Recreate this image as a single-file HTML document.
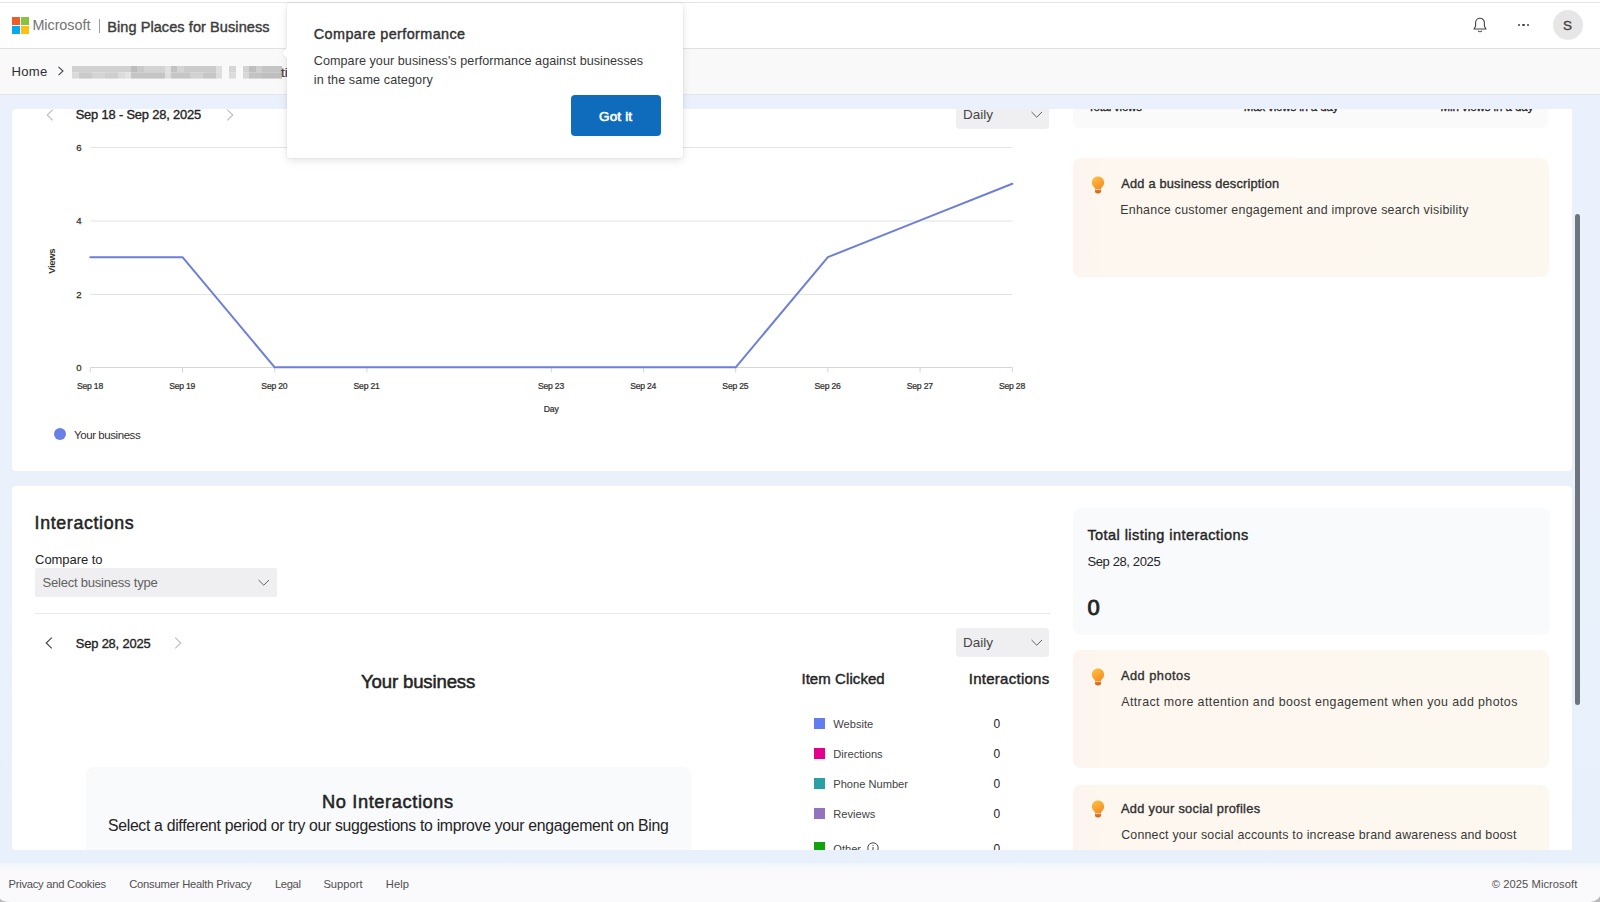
<!DOCTYPE html>
<html><head><meta charset="utf-8">
<style>
*{box-sizing:border-box;margin:0;padding:0}
html,body{width:1600px;height:902px;overflow:hidden;background:#fff;font-family:"Liberation Sans",sans-serif;color:#242424}
.t{position:absolute;white-space:nowrap;line-height:1}
.b{position:absolute}
.ic{position:absolute}
.bulb{position:absolute}
</style></head>
<body>
<div class="b" style="left:0;top:2px;width:1600px;height:1px;background:#e4e4e4"></div>
<div class="b" style="left:0;top:3px;width:1600px;height:45px;background:#ffffff"></div>
<div class="b" style="left:0;top:48px;width:1600px;height:1px;background:#e1e1e1"></div>
<div class="b" style="left:0;top:49px;width:1600px;height:45px;background:#faf9fa"></div>
<div class="b" style="left:0;top:94px;width:1600px;height:1px;background:#e2e5ea"></div>
<div class="b" style="left:0;top:95px;width:1600px;height:769px;background:linear-gradient(180deg,#ebf1fc,#e8f1fb)"></div>
<div class="b" style="left:0;top:863px;width:1600px;height:39px;background:linear-gradient(180deg,#eff5fb 0px,#f7f8fb 5px,#faf9fb 10px)"></div>

<!-- header -->
<div class="b" style="left:12px;top:17px;width:8px;height:8px;background:#f05b27"></div>
<div class="b" style="left:21px;top:17px;width:8px;height:8px;background:#89c23f"></div>
<div class="b" style="left:12px;top:26px;width:8px;height:8px;background:#02aaee"></div>
<div class="b" style="left:21px;top:26px;width:8px;height:8px;background:#fdbf12"></div>
<div class="b" style="left:98.5px;top:18.5px;width:1px;height:14px;background:#9e9e9e"></div>
<svg class="ic" style="left:1472px;top:17px" width="16" height="16" viewBox="0 0 16 16"><path d="M8 1.2c-2.6 0-4.4 2-4.4 4.5v3.6L2 12h12l-1.6-2.7V5.7C12.4 3.2 10.6 1.2 8 1.2z" fill="none" stroke="#424242" stroke-width="1.1" stroke-linejoin="round"/><path d="M6.3 13.6c.3.8 1 1.2 1.7 1.2s1.4-.4 1.7-1.2" fill="none" stroke="#424242" stroke-width="1.1"/></svg>
<div class="b" style="left:1517.5px;top:24px;width:2.4px;height:2.4px;border-radius:50%;background:#424242"></div>
<div class="b" style="left:1522.2px;top:24px;width:2.4px;height:2.4px;border-radius:50%;background:#424242"></div>
<div class="b" style="left:1527px;top:24px;width:2.4px;height:2.4px;border-radius:50%;background:#424242"></div>
<div class="b" style="left:1552.5px;top:10px;width:30px;height:30px;border-radius:50%;background:#e6e6e6"></div>
<div class="t" style="left:1563px;top:19px;font-size:13.5px;font-weight:400;-webkit-text-stroke:0.35px #424242;color:#424242">S</div>
<div class="t" style="left:32.40px;top:18.11px;font-size:14.40px;font-weight:400;color:#737373;letter-spacing:-0.047px;">Microsoft</div>
<div class="t" style="left:107.20px;top:19.53px;font-size:14.50px;font-weight:400;color:#3d3d3d;letter-spacing:0.085px;-webkit-text-stroke:0.41px #3d3d3d;">Bing Places for Business</div>
<div class="t" style="left:11.40px;top:65.01px;font-size:13.10px;font-weight:400;color:#2e2e2e;letter-spacing:0.318px;">Home</div>
<!-- breadcrumb -->
<svg class="ic" style="left:57px;top:66px" width="8" height="10" viewBox="0 0 8 10"><path d="M1.5 0.8L6 5l-4.5 4.2" fill="none" stroke="#424242" stroke-width="1.1"/></svg>
<svg class="b" style="left:0;top:0" width="300" height="90"><rect x="72" y="66" width="59" height="6.3" fill="#d1d1d1"/><rect x="131" y="66" width="6" height="6.3" fill="#bcbcbc"/><rect x="137" y="66" width="7" height="6.3" fill="#c9c9c9"/><rect x="144" y="66" width="21" height="6.3" fill="#d3d3d3"/><rect x="165" y="66" width="6" height="6.3" fill="#e0e0e0"/><rect x="171" y="66" width="6" height="6.3" fill="#c2c2c2"/><rect x="177" y="66" width="7" height="6.3" fill="#d4d4d4"/><rect x="184" y="66" width="32" height="6.3" fill="#cbcbcb"/><rect x="216" y="66" width="6" height="6.3" fill="#dedede"/><rect x="229" y="66" width="7" height="6.3" fill="#d6d6d6"/><rect x="243" y="66" width="6" height="6.3" fill="#d3d3d3"/><rect x="249" y="66" width="7" height="6.3" fill="#bebebe"/><rect x="256" y="66" width="6" height="6.3" fill="#cfcfcf"/><rect x="262" y="66" width="20" height="6.3" fill="#c4c4c4"/><rect x="72" y="72.3" width="7" height="6.3" fill="#d9d9d9"/><rect x="79" y="72.3" width="13" height="6.3" fill="#cacaca"/><rect x="92" y="72.3" width="13" height="6.3" fill="#d4d4d4"/><rect x="105" y="72.3" width="13" height="6.3" fill="#cecece"/><rect x="118" y="72.3" width="7" height="6.3" fill="#dbdbdb"/><rect x="125" y="72.3" width="6" height="6.3" fill="#e3e3e3"/><rect x="131" y="72.3" width="34" height="6.3" fill="#c5c5c5"/><rect x="165" y="72.3" width="6" height="6.3" fill="#dedede"/><rect x="171" y="72.3" width="19" height="6.3" fill="#c6c6c6"/><rect x="190" y="72.3" width="13" height="6.3" fill="#d1d1d1"/><rect x="203" y="72.3" width="13" height="6.3" fill="#c6c6c6"/><rect x="216" y="72.3" width="6" height="6.3" fill="#dddddd"/><rect x="229" y="72.3" width="7" height="6.3" fill="#dbdbdb"/><rect x="243" y="72.3" width="6" height="6.3" fill="#d7d7d7"/><rect x="249" y="72.3" width="13" height="6.3" fill="#c3c3c3"/><rect x="262" y="72.3" width="20" height="6.3" fill="#bfbfbf"/></svg>
<div class="t" style="left:281px;top:65.5px;font-size:13.5px;color:#3a3a3a;-webkit-text-stroke:0.2px #3a3a3a">ti</div>

<!-- clip container -->
<div class="b" style="left:12px;top:109px;width:1560px;height:741px;overflow:hidden;border-radius:4px 0 0 4px">
 <div class="b" style="left:-12px;top:-109px;width:1600px;height:902px">
  <div class="b" style="left:12px;top:60px;width:1560px;height:411px;background:#fff;border-radius:4px"></div>
  <div class="b" style="left:12px;top:485.7px;width:1560px;height:500px;background:#fff;border-radius:4px"></div>
  <!-- chart card -->
  <svg class="ic" style="left:45.5px;top:108.5px" width="8" height="12" viewBox="0 0 8 12"><path d="M6.8 0.6L1.2 6l5.6 5.4" fill="none" stroke="#bdbdbd" stroke-width="1.1"/></svg>
  <svg class="ic" style="left:225.5px;top:108.5px" width="8" height="12" viewBox="0 0 8 12"><path d="M1.2 0.6L6.8 6l-5.6 5.4" fill="none" stroke="#bdbdbd" stroke-width="1.1"/></svg>
  <div class="b" style="left:956px;top:100px;width:93px;height:29px;background:#efeff1;border-radius:4px"></div>
  <svg class="ic" style="left:1030.5px;top:110.5px" width="12" height="8" viewBox="0 0 12 8"><path d="M0.5 1.0L5.75 6.2 11 1.0" fill="none" stroke="#5a5a5a" stroke-width="0.95"/></svg>
  <svg class="b" style="left:0;top:0" width="1100" height="460"><line x1="90.3" y1="147.50" x2="1012.3" y2="147.50" stroke="#e3e3e3" stroke-width="1"/><line x1="90.3" y1="221.00" x2="1012.3" y2="221.00" stroke="#e3e3e3" stroke-width="1"/><line x1="90.3" y1="294.50" x2="1012.3" y2="294.50" stroke="#e3e3e3" stroke-width="1"/><line x1="90.3" y1="367.50" x2="1012.3" y2="367.50" stroke="#d6d6d6" stroke-width="1"/><line x1="90.30" y1="367.5" x2="90.30" y2="372.5" stroke="#d6d6d6" stroke-width="1"/><line x1="182.50" y1="367.5" x2="182.50" y2="372.5" stroke="#d6d6d6" stroke-width="1"/><line x1="274.70" y1="367.5" x2="274.70" y2="372.5" stroke="#d6d6d6" stroke-width="1"/><line x1="366.90" y1="367.5" x2="366.90" y2="372.5" stroke="#d6d6d6" stroke-width="1"/><line x1="551.30" y1="367.5" x2="551.30" y2="372.5" stroke="#d6d6d6" stroke-width="1"/><line x1="643.50" y1="367.5" x2="643.50" y2="372.5" stroke="#d6d6d6" stroke-width="1"/><line x1="735.70" y1="367.5" x2="735.70" y2="372.5" stroke="#d6d6d6" stroke-width="1"/><line x1="827.90" y1="367.5" x2="827.90" y2="372.5" stroke="#d6d6d6" stroke-width="1"/><line x1="920.10" y1="367.5" x2="920.10" y2="372.5" stroke="#d6d6d6" stroke-width="1"/><line x1="1012.30" y1="367.5" x2="1012.30" y2="372.5" stroke="#d6d6d6" stroke-width="1"/><polyline points="90.30,257.14 182.50,257.14 274.70,367.30 366.90,367.30 459.10,367.30 551.30,367.30 643.50,367.30 735.70,367.30 827.90,257.14 920.10,220.42 1012.30,183.70" fill="none" stroke="#6e7fd8" stroke-width="2" stroke-linejoin="round" stroke-linecap="round"/></svg>
  <div class="t" style="left:39.5px;top:257.2px;font-size:9.5px;font-weight:700;color:#323130;transform:rotate(-90deg);transform-origin:center;width:24px;text-align:center;letter-spacing:-0.4px">Views</div>
  <div class="b" style="left:54.25px;top:427.6px;width:12px;height:12px;border-radius:50%;background:#6a7fe6"></div>
  <div class="b" style="left:1073px;top:60px;width:475px;height:67.5px;background:#fafafa;border-radius:6px"></div>
  <div class="b" style="left:1073px;top:157.5px;width:476px;height:119px;border-radius:8px;background:linear-gradient(90deg,#fdf4ef 0%,#fdf7ef 6%,#fdf8ef 100%)"></div>
  <div class="b" style="left:1091px;top:176px"><svg class="bulb" viewBox="0 0 14 18" width="14" height="18"><defs><linearGradient id="bg1" x1="0.2" y1="0" x2="0.8" y2="1"><stop offset="0" stop-color="#fcc041"/><stop offset="1" stop-color="#f58a22"/></linearGradient><linearGradient id="bb1" x1="0" y1="0" x2="0" y2="1"><stop offset="0" stop-color="#e8762a"/><stop offset="1" stop-color="#d35f1f"/></linearGradient></defs><path d="M7 0.6C3.6 0.6 0.9 3.2 0.9 6.5c0 2 .9 3.5 2.2 4.8.6.6.9 1.1.9 1.8h6c0-.7.3-1.2.9-1.8 1.3-1.3 2.2-2.8 2.2-4.8C13.1 3.2 10.4.6 7 .6z" fill="url(#bg1)"/><rect x="4" y="13.1" width="6" height="0.9" fill="#fcc596"/><path d="M4 14h6v1.6c0 1.1-1.3 2-3 2s-3-.9-3-2z" fill="url(#bb1)"/></svg></div>
  <!-- card 2 -->
  <div class="b" style="left:34.6px;top:567.7px;width:242.4px;height:29.3px;background:#efeff1;border-radius:2px"></div>
  <svg class="ic" style="left:258.3px;top:578.5px" width="12" height="8" viewBox="0 0 12 8"><path d="M0.5 1.0L5.75 6.2 11 1.0" fill="none" stroke="#5a5a5a" stroke-width="0.95"/></svg>
  <div class="b" style="left:34.6px;top:612.5px;width:1015px;height:1px;background:#e9e9eb"></div>
  <svg class="ic" style="left:44.5px;top:637.0px" width="8" height="12" viewBox="0 0 8 12"><path d="M6.8 0.6L1.2 6l5.6 5.4" fill="none" stroke="#424242" stroke-width="1.1"/></svg>
  <svg class="ic" style="left:174.0px;top:637.0px" width="8" height="12" viewBox="0 0 8 12"><path d="M1.2 0.6L6.8 6l-5.6 5.4" fill="none" stroke="#bdbdbd" stroke-width="1.1"/></svg>
  <div class="b" style="left:956px;top:628.4px;width:93px;height:29.1px;background:#efeff1;border-radius:4px"></div>
  <svg class="ic" style="left:1030.5px;top:638.5px" width="12" height="8" viewBox="0 0 12 8"><path d="M0.5 1.0L5.75 6.2 11 1.0" fill="none" stroke="#5a5a5a" stroke-width="0.95"/></svg>
  <div class="b" style="left:814.1px;top:718.0px;width:11px;height:11px;background:#637cef"></div><div class="b" style="left:814.1px;top:748.0px;width:11px;height:11px;background:#e3008c"></div><div class="b" style="left:814.1px;top:778.0px;width:11px;height:11px;background:#2aa0a4"></div><div class="b" style="left:814.1px;top:808.0px;width:11px;height:11px;background:#9373c0"></div><div class="b" style="left:814.1px;top:842.0px;width:11px;height:11px;background:#13a10e"></div>
  <div class="b" style="left:85.5px;top:766.5px;width:605.3px;height:200px;background:#f9fafc;border-radius:8px"></div>
  <div class="b" style="left:1073px;top:508.3px;width:476.5px;height:126.9px;background:#f9fafc;border-radius:8px"></div>
  <div class="b" style="left:1073px;top:649.8px;width:476px;height:117.8px;border-radius:8px;background:linear-gradient(90deg,#fdf4ef 0%,#fdf7ef 6%,#fdf8ef 100%)"></div>
  <div class="b" style="left:1073px;top:784.5px;width:476px;height:150px;border-radius:8px;background:linear-gradient(90deg,#fdf4ef 0%,#fdf7ef 6%,#fdf8ef 100%)"></div>
  <div class="b" style="left:1091px;top:668px"><svg class="bulb" viewBox="0 0 14 18" width="14" height="18"><defs><linearGradient id="bg2" x1="0.2" y1="0" x2="0.8" y2="1"><stop offset="0" stop-color="#fcc041"/><stop offset="1" stop-color="#f58a22"/></linearGradient><linearGradient id="bb2" x1="0" y1="0" x2="0" y2="1"><stop offset="0" stop-color="#e8762a"/><stop offset="1" stop-color="#d35f1f"/></linearGradient></defs><path d="M7 0.6C3.6 0.6 0.9 3.2 0.9 6.5c0 2 .9 3.5 2.2 4.8.6.6.9 1.1.9 1.8h6c0-.7.3-1.2.9-1.8 1.3-1.3 2.2-2.8 2.2-4.8C13.1 3.2 10.4.6 7 .6z" fill="url(#bg2)"/><rect x="4" y="13.1" width="6" height="0.9" fill="#fcc596"/><path d="M4 14h6v1.6c0 1.1-1.3 2-3 2s-3-.9-3-2z" fill="url(#bb2)"/></svg></div>
  <div class="b" style="left:1091px;top:800px"><svg class="bulb" viewBox="0 0 14 18" width="14" height="18"><defs><linearGradient id="bg3" x1="0.2" y1="0" x2="0.8" y2="1"><stop offset="0" stop-color="#fcc041"/><stop offset="1" stop-color="#f58a22"/></linearGradient><linearGradient id="bb3" x1="0" y1="0" x2="0" y2="1"><stop offset="0" stop-color="#e8762a"/><stop offset="1" stop-color="#d35f1f"/></linearGradient></defs><path d="M7 0.6C3.6 0.6 0.9 3.2 0.9 6.5c0 2 .9 3.5 2.2 4.8.6.6.9 1.1.9 1.8h6c0-.7.3-1.2.9-1.8 1.3-1.3 2.2-2.8 2.2-4.8C13.1 3.2 10.4.6 7 .6z" fill="url(#bg3)"/><rect x="4" y="13.1" width="6" height="0.9" fill="#fcc596"/><path d="M4 14h6v1.6c0 1.1-1.3 2-3 2s-3-.9-3-2z" fill="url(#bb3)"/></svg></div>
  <svg class="ic" style="left:866.5px;top:841.5px" width="12" height="12" viewBox="0 0 12 12"><circle cx="6" cy="6" r="5.2" fill="none" stroke="#424242" stroke-width="1"/><path d="M6 5v3.4" stroke="#424242" stroke-width="1"/><circle cx="6" cy="3.3" r=".6" fill="#424242"/></svg>
  <div class="t" style="left:75.70px;top:108.98px;font-size:12.90px;font-weight:400;color:#242424;letter-spacing:-0.175px;-webkit-text-stroke:0.36px #242424;">Sep 18 - Sep 28, 2025</div>
  <div class="t" style="left:963.00px;top:107.77px;font-size:13.50px;font-weight:400;color:#454545;letter-spacing:0.000px;">Daily</div>
  <div class="t" style="left:76.30px;top:142.57px;font-size:9.60px;font-weight:400;color:#323130;letter-spacing:0.000px;-webkit-text-stroke:0.27px #323130;">6</div>
  <div class="t" style="left:76.30px;top:216.07px;font-size:9.60px;font-weight:400;color:#323130;letter-spacing:0.000px;-webkit-text-stroke:0.27px #323130;">4</div>
  <div class="t" style="left:76.30px;top:289.57px;font-size:9.60px;font-weight:400;color:#323130;letter-spacing:0.000px;-webkit-text-stroke:0.27px #323130;">2</div>
  <div class="t" style="left:76.30px;top:362.87px;font-size:9.60px;font-weight:400;color:#323130;letter-spacing:0.000px;-webkit-text-stroke:0.27px #323130;">0</div>
  <div class="t" style="left:76.95px;top:381.62px;font-size:8.60px;font-weight:400;color:#323130;letter-spacing:-0.200px;-webkit-text-stroke:0.24px #323130;">Sep 18</div>
  <div class="t" style="left:169.15px;top:381.62px;font-size:8.60px;font-weight:400;color:#323130;letter-spacing:-0.200px;-webkit-text-stroke:0.24px #323130;">Sep 19</div>
  <div class="t" style="left:261.35px;top:381.62px;font-size:8.60px;font-weight:400;color:#323130;letter-spacing:-0.200px;-webkit-text-stroke:0.24px #323130;">Sep 20</div>
  <div class="t" style="left:353.55px;top:381.62px;font-size:8.60px;font-weight:400;color:#323130;letter-spacing:-0.200px;-webkit-text-stroke:0.24px #323130;">Sep 21</div>
  <div class="t" style="left:537.95px;top:381.62px;font-size:8.60px;font-weight:400;color:#323130;letter-spacing:-0.200px;-webkit-text-stroke:0.24px #323130;">Sep 23</div>
  <div class="t" style="left:630.15px;top:381.62px;font-size:8.60px;font-weight:400;color:#323130;letter-spacing:-0.200px;-webkit-text-stroke:0.24px #323130;">Sep 24</div>
  <div class="t" style="left:722.35px;top:381.62px;font-size:8.60px;font-weight:400;color:#323130;letter-spacing:-0.200px;-webkit-text-stroke:0.24px #323130;">Sep 25</div>
  <div class="t" style="left:814.55px;top:381.62px;font-size:8.60px;font-weight:400;color:#323130;letter-spacing:-0.200px;-webkit-text-stroke:0.24px #323130;">Sep 26</div>
  <div class="t" style="left:906.75px;top:381.62px;font-size:8.60px;font-weight:400;color:#323130;letter-spacing:-0.200px;-webkit-text-stroke:0.24px #323130;">Sep 27</div>
  <div class="t" style="left:998.95px;top:381.62px;font-size:8.60px;font-weight:400;color:#323130;letter-spacing:-0.200px;-webkit-text-stroke:0.24px #323130;">Sep 28</div>
  <div class="t" style="left:543.75px;top:404.72px;font-size:8.60px;font-weight:400;color:#323130;letter-spacing:-0.113px;-webkit-text-stroke:0.24px #323130;">Day</div>
  <div class="t" style="left:74.10px;top:429.57px;font-size:11.50px;font-weight:400;color:#323130;letter-spacing:-0.439px;">Your business</div>
  <div class="t" style="left:1088.00px;top:101.67px;font-size:11.50px;font-weight:400;color:#242424;letter-spacing:-0.231px;-webkit-text-stroke:0.32px #242424;">Total views</div>
  <div class="t" style="left:1243.70px;top:101.67px;font-size:11.50px;font-weight:400;color:#242424;letter-spacing:-0.142px;-webkit-text-stroke:0.32px #242424;">Max views in a day</div>
  <div class="t" style="left:1440.60px;top:101.67px;font-size:11.50px;font-weight:400;color:#242424;letter-spacing:-0.066px;-webkit-text-stroke:0.32px #242424;">Min views in a day</div>
  <div class="t" style="left:1121.30px;top:177.96px;font-size:12.80px;font-weight:400;color:#303030;letter-spacing:0.193px;-webkit-text-stroke:0.36px #303030;">Add a business description</div>
  <div class="t" style="left:1120.30px;top:204.00px;font-size:12.40px;font-weight:400;color:#383838;letter-spacing:0.253px;">Enhance customer engagement and improve search visibility</div>
  <div class="t" style="left:34.60px;top:514.73px;font-size:17.80px;font-weight:400;color:#242424;letter-spacing:0.652px;-webkit-text-stroke:0.50px #242424;">Interactions</div>
  <div class="t" style="left:35.10px;top:552.90px;font-size:13.00px;font-weight:400;color:#242424;letter-spacing:-0.066px;">Compare to</div>
  <div class="t" style="left:42.50px;top:576.30px;font-size:13.00px;font-weight:400;color:#616161;letter-spacing:-0.211px;">Select business type</div>
  <div class="t" style="left:75.80px;top:638.18px;font-size:12.90px;font-weight:400;color:#242424;letter-spacing:-0.172px;-webkit-text-stroke:0.36px #242424;">Sep 28, 2025</div>
  <div class="t" style="left:361.00px;top:672.86px;font-size:18.60px;font-weight:400;color:#242424;letter-spacing:-0.154px;-webkit-text-stroke:0.52px #242424;">Your business</div>
  <div class="t" style="left:801.40px;top:671.10px;font-size:15.00px;font-weight:400;color:#242424;letter-spacing:0.073px;-webkit-text-stroke:0.42px #242424;">Item Clicked</div>
  <div class="t" style="left:968.80px;top:671.10px;font-size:15.00px;font-weight:400;color:#242424;letter-spacing:0.258px;-webkit-text-stroke:0.42px #242424;">Interactions</div>
  <div class="t" style="left:963.00px;top:636.17px;font-size:13.50px;font-weight:400;color:#454545;letter-spacing:0.000px;">Daily</div>
  <div class="t" style="left:833.30px;top:719.30px;font-size:11.10px;font-weight:400;color:#424242;letter-spacing:0.000px;">Website</div>
  <div class="t" style="left:993.50px;top:718.34px;font-size:12.00px;font-weight:400;color:#242424;letter-spacing:0.000px;">0</div>
  <div class="t" style="left:833.30px;top:749.30px;font-size:11.10px;font-weight:400;color:#424242;letter-spacing:0.000px;">Directions</div>
  <div class="t" style="left:993.50px;top:748.34px;font-size:12.00px;font-weight:400;color:#242424;letter-spacing:0.000px;">0</div>
  <div class="t" style="left:833.30px;top:779.30px;font-size:11.10px;font-weight:400;color:#424242;letter-spacing:0.000px;">Phone Number</div>
  <div class="t" style="left:993.50px;top:778.34px;font-size:12.00px;font-weight:400;color:#242424;letter-spacing:0.000px;">0</div>
  <div class="t" style="left:833.30px;top:809.30px;font-size:11.10px;font-weight:400;color:#424242;letter-spacing:0.000px;">Reviews</div>
  <div class="t" style="left:993.50px;top:808.34px;font-size:12.00px;font-weight:400;color:#242424;letter-spacing:0.000px;">0</div>
  <div class="t" style="left:833.30px;top:843.80px;font-size:11.10px;font-weight:400;color:#424242;letter-spacing:0.000px;">Other</div>
  <div class="t" style="left:993.50px;top:842.84px;font-size:12.00px;font-weight:400;color:#242424;letter-spacing:0.000px;">0</div>
  <div class="t" style="left:322.00px;top:793.11px;font-size:18.30px;font-weight:400;color:#242424;letter-spacing:0.591px;-webkit-text-stroke:0.51px #242424;">No Interactions</div>
  <div class="t" style="left:108.00px;top:818.33px;font-size:15.80px;font-weight:400;color:#242424;letter-spacing:-0.311px;">Select a different period or try our suggestions to improve your engagement on Bing</div>
  <div class="t" style="left:1087.40px;top:527.73px;font-size:14.50px;font-weight:400;color:#242424;letter-spacing:0.438px;-webkit-text-stroke:0.41px #242424;">Total listing interactions</div>
  <div class="t" style="left:1087.40px;top:554.80px;font-size:13.00px;font-weight:400;color:#242424;letter-spacing:-0.374px;">Sep 28, 2025</div>
  <div class="t" style="left:1087.50px;top:596.68px;font-size:22.00px;font-weight:400;color:#242424;letter-spacing:0.000px;-webkit-text-stroke:0.9px #242424;">0</div>
  <div class="t" style="left:1121.00px;top:669.96px;font-size:12.80px;font-weight:400;color:#303030;letter-spacing:0.477px;-webkit-text-stroke:0.36px #303030;">Add photos</div>
  <div class="t" style="left:1121.20px;top:695.90px;font-size:12.40px;font-weight:400;color:#383838;letter-spacing:0.424px;">Attract more attention and boost engagement when you add photos</div>
  <div class="t" style="left:1121.00px;top:802.76px;font-size:12.80px;font-weight:400;color:#303030;letter-spacing:0.293px;-webkit-text-stroke:0.36px #303030;">Add your social profiles</div>
  <div class="t" style="left:1121.20px;top:828.80px;font-size:12.40px;font-weight:400;color:#383838;letter-spacing:0.200px;">Connect your social accounts to increase brand awareness and boost</div>
  <div class="t" style="left:1121.30px;top:849.43px;font-size:12.60px;font-weight:400;color:#242424;letter-spacing:0.000px;">engagement</div>
 </div>
</div>
<!-- scrollbar -->
<div class="b" style="left:1574.8px;top:214px;width:5.6px;height:491px;border-radius:3px;background:#6f757c"></div>

<!-- popup -->
<div class="b" style="left:287px;top:3px;width:396px;height:155px;background:#fff;border-radius:3px;box-shadow:0 0 2px rgba(0,0,0,0.12),0 3px 8px rgba(0,0,0,0.10)"></div>
<svg class="b" style="left:279px;top:46px" width="10" height="14" viewBox="0 0 10 14"><path d="M8.2 1L2.6 7l5.6 6" fill="#fff" stroke="rgba(0,0,0,0.08)" stroke-width="0.8"/><rect x="8" y="0" width="3" height="14" fill="#fff"/></svg>
<div class="b" style="left:571px;top:95.2px;width:90px;height:41px;background:#0f6cbd;border-radius:4px"></div>
<div class="t" style="left:313.80px;top:27.41px;font-size:14.40px;font-weight:400;color:#323232;letter-spacing:0.407px;-webkit-text-stroke:0.40px #323232;">Compare performance</div>
<div class="t" style="left:313.80px;top:54.63px;font-size:12.60px;font-weight:400;color:#383838;letter-spacing:0.053px;">Compare your business's performance against businesses</div>
<div class="t" style="left:313.80px;top:73.63px;font-size:12.60px;font-weight:400;color:#383838;letter-spacing:0.110px;">in the same category</div>
<div class="t" style="left:599.00px;top:109.97px;font-size:13.50px;font-weight:400;color:#ffffff;letter-spacing:0.162px;-webkit-text-stroke:0.6px #ffffff;">Got it</div>

<!-- footer -->
<svg class="b" style="left:0;top:888px" width="16" height="14" viewBox="0 0 16 14"><path d="M0 10.5 Q1.5 13.6 11 14 L0 14 Z" fill="#b8b8b8"/></svg>
<svg class="b" style="left:1584px;top:888px" width="16" height="14" viewBox="0 0 16 14"><path d="M16 8 Q14 13.2 6 14 L16 14 Z" fill="#b8b8b8"/></svg>
<div class="t" style="left:8.50px;top:879.22px;font-size:11.20px;font-weight:400;color:#505050;letter-spacing:-0.249px;">Privacy and Cookies</div>
<div class="t" style="left:129.20px;top:879.22px;font-size:11.20px;font-weight:400;color:#505050;letter-spacing:-0.197px;">Consumer Health Privacy</div>
<div class="t" style="left:275.00px;top:879.22px;font-size:11.20px;font-weight:400;color:#505050;letter-spacing:-0.347px;">Legal</div>
<div class="t" style="left:323.40px;top:879.22px;font-size:11.20px;font-weight:400;color:#505050;letter-spacing:0.004px;">Support</div>
<div class="t" style="left:385.80px;top:879.22px;font-size:11.20px;font-weight:400;color:#505050;letter-spacing:0.038px;">Help</div>
<div class="t" style="left:1491.80px;top:879.22px;font-size:11.20px;font-weight:400;color:#505050;letter-spacing:0.052px;">© 2025 Microsoft</div>
</body></html>
